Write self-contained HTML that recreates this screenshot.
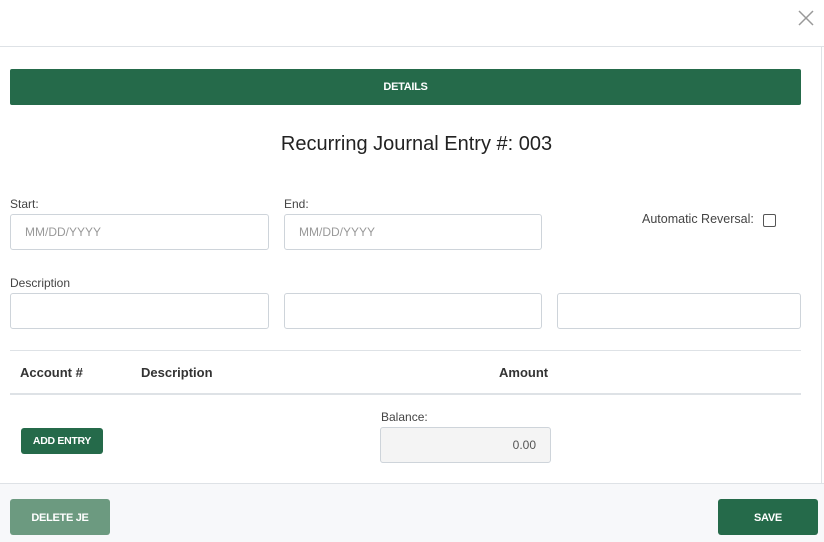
<!DOCTYPE html>
<html><head><style>
body{margin:0;width:824px;height:541px;position:relative;background:#fff;font-family:"Liberation Sans",sans-serif;color:#333;overflow:hidden}
.a{position:absolute}
.inp{position:absolute;border:1px solid #ced4da;border-radius:3px;background:#fff;box-sizing:border-box;font-size:12px;color:#999;padding-left:14px;line-height:34px}
.lbl{position:absolute;font-size:12px;color:#444}
.btn{position:absolute;color:#fff;font-weight:bold;font-size:11px;text-align:center;border-radius:3px;letter-spacing:-0.3px}
</style></head><body>
<div class="a" style="left:0;top:46px;width:824px;height:1px;background:#dee2e6"></div>
<div class="a" style="left:821px;top:47px;width:1px;height:436px;background:#dee2e6"></div>
<svg class="a" style="left:798px;top:10px" width="16" height="16"><path d="M1 1L15 15M15 1L1 15" stroke="#999" stroke-width="1.5"/></svg>
<div class="btn" style="left:10px;top:69px;width:791px;height:36px;line-height:37px;background:#256a4a;border-radius:2px">DETAILS</div>
<div class="a" style="left:0;width:824px;top:133px;text-align:center;font-size:20px;color:#222;padding-left:9px;box-sizing:border-box">Recurring Journal Entry #: 003</div>
<div class="lbl" style="left:10px;top:197px">Start:</div>
<div class="lbl" style="left:284px;top:197px">End:</div>
<div class="inp" style="left:10px;top:214px;width:259px;height:36px">MM/DD/YYYY</div>
<div class="inp" style="left:284px;top:214px;width:258px;height:36px">MM/DD/YYYY</div>
<div class="lbl" style="left:642px;top:212px;font-size:12.5px">Automatic Reversal:</div>
<div class="a" style="left:763px;top:214px;width:11px;height:11px;border:1px solid #555;border-radius:2px"></div>
<div class="lbl" style="left:10px;top:276px">Description</div>
<div class="inp" style="left:10px;top:293px;width:259px;height:36px"></div>
<div class="inp" style="left:284px;top:293px;width:258px;height:36px"></div>
<div class="inp" style="left:557px;top:293px;width:244px;height:36px"></div>
<div class="a" style="left:10px;top:350px;width:791px;height:1px;background:#dee2e6"></div>
<div class="a" style="left:20px;top:365px;font-size:13px;font-weight:bold;color:#333">Account #</div>
<div class="a" style="left:141px;top:365px;font-size:13px;font-weight:bold;color:#333">Description</div>
<div class="a" style="left:499px;top:365px;font-size:13px;font-weight:bold;color:#333">Amount</div>
<div class="a" style="left:10px;top:393px;width:791px;height:2px;background:#dee2e6"></div>
<div class="btn" style="left:21px;top:428px;width:82px;height:26px;line-height:27px;background:#256a4a;font-size:10.5px">ADD ENTRY</div>
<div class="lbl" style="left:381px;top:410px">Balance:</div>
<div class="inp" style="left:380px;top:427px;width:171px;height:36px;background:#f4f4f4;text-align:right;padding-right:14px;color:#555">0.00</div>
<div class="a" style="left:0;top:483px;width:824px;height:58px;background:#f7f8fa;border-top:1px solid #dee2e6"></div>
<div class="btn" style="left:10px;top:499px;width:100px;height:36px;line-height:38px;background:#6c9a80">DELETE JE</div>
<div class="btn" style="left:718px;top:499px;width:100px;height:36px;line-height:38px;background:#256a4a">SAVE</div>
</body></html>
